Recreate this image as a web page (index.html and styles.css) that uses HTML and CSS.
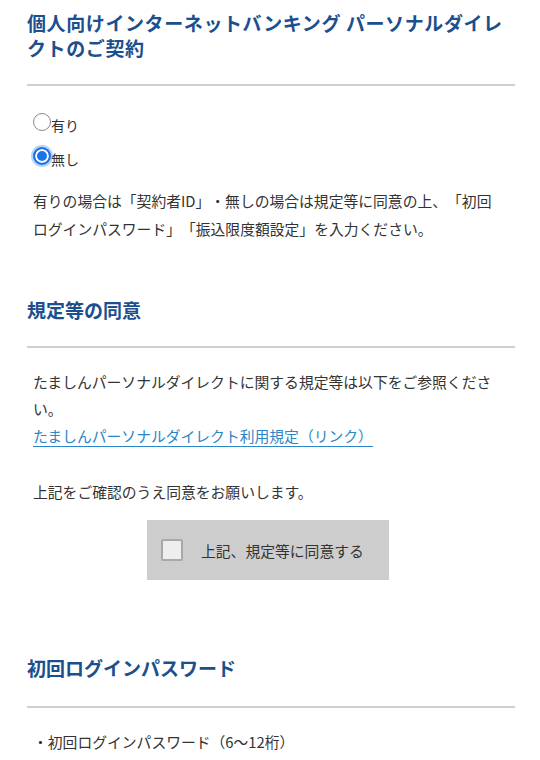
FILE: index.html
```html
<!DOCTYPE html>
<html lang="ja">
<head>
<meta charset="utf-8">
<link rel="stylesheet" href="styles.css">
</head>
<body>
<main class="page">
  <section class="sec sec-contract">
    <h1 class="heading">個人向けインターネットバンキング パーソナルダイレクトのご契約</h1>
    <hr class="divider">
    <div class="radios">
      <label class="radio"><span class="radio-dot"></span><span class="radio-label">有り</span></label>
      <label class="radio"><span class="radio-dot checked"></span><span class="radio-label">無し</span></label>
    </div>
    <p class="text note">有りの場合は「契約者ID」・無しの場合は規定等に同意の上、「初回ログインパスワード」「振込限度額設定」を入力ください。</p>
  </section>

  <section class="sec sec-agree">
    <h2 class="heading">規定等の同意</h2>
    <hr class="divider">
    <p class="text refs">たましんパーソナルダイレクトに関する規定等は以下をご参照ください。<br><a class="link" href="#">たましんパーソナルダイレクト利用規定（リンク）</a></p>
    <p class="text confirm">上記をご確認のうえ同意をお願いします。</p>
    <div class="agree-wrap">
      <label class="agree-box"><span class="checkbox"></span><span class="agree-text">上記、規定等に同意する</span></label>
    </div>
  </section>

  <section class="sec sec-pass">
    <h2 class="heading">初回ログインパスワード</h2>
    <hr class="divider">
    <p class="text bullet">・初回ログインパスワード（6〜12桁）</p>
  </section>
</main>
</body>
</html>
```

FILE: styles.css
```css
* { box-sizing: border-box; }
html, body { margin: 0; padding: 0; background: #fff; }
body {
  font-family: "Noto Sans CJK JP", "Noto Sans", sans-serif;
  color: #333;
  width: 540px;
  height: 760px;
  overflow: hidden;
  text-spacing-trim: space-all;
}
.page { padding: 0 25px 0 27px; }
.heading {
  margin: 0;
  font-size: 19px;
  line-height: 25px;
  font-weight: 700;
  color: #1c4f8d;
  letter-spacing: 0;
  text-spacing-trim: space-all;
}
.sec-contract .heading { padding-top: 10px; letter-spacing: 0.6px; }
.divider {
  border: 0;
  height: 2px;
  background: #cfcfcf;
  margin: 0;
}
.sec-contract .divider { margin-top: 24px; }
.radios { display: flex; flex-direction: column; gap: 14px; padding-left: 6px; margin-top: 26px; }
.radio { display: flex; align-items: center; height: 20px; }
.radio-dot {
  width: 18px; height: 18px; border-radius: 50%;
  border: 1.5px solid #8a8a8a; background: #fff; flex: none;
}
.radio-dot.checked {
  border: 2px solid #1a73e8;
  background: #1a73e8;
  box-shadow: inset 0 0 0 2px #fff, 0 0 0 2px #b9d3f5;
}
.radio-label { font-size: 14px; margin-top: 6px; color: #333; }
.text { margin: 0; padding: 0 10px 0 6px; font-size: 14.8px; line-height: 28px; color: #333; text-spacing-trim: space-all; }
.note { margin-top: 21px; }
.sec-agree .heading { margin-top: 54px; }
.sec-agree .divider { margin-top: 24px; }
.refs { margin-top: 20px; line-height: 27px; }
.link { color: #2a86c6; text-decoration: underline; text-underline-offset: 4px; }
.confirm { margin-top: 29px; }
.agree-wrap { display: flex; justify-content: center; margin-top: 14px; padding-right: 6px; }
.agree-box {
  display: flex; align-items: center;
  width: 242px; height: 60px;
  background: #cdcdcd;
  padding-left: 14px;
  gap: 18px;
}
.checkbox {
  width: 22px; height: 22px; flex: none;
  border: 2px solid #a9a9a9; border-radius: 2px;
  background: #eeeeee;
}
.agree-text { font-size: 14.8px; color: #333; }
.sec-pass .heading { margin-top: 75px; }
.sec-pass .divider { margin-top: 26px; }
.bullet { margin-top: 20px; padding-left: 6px; }
```
